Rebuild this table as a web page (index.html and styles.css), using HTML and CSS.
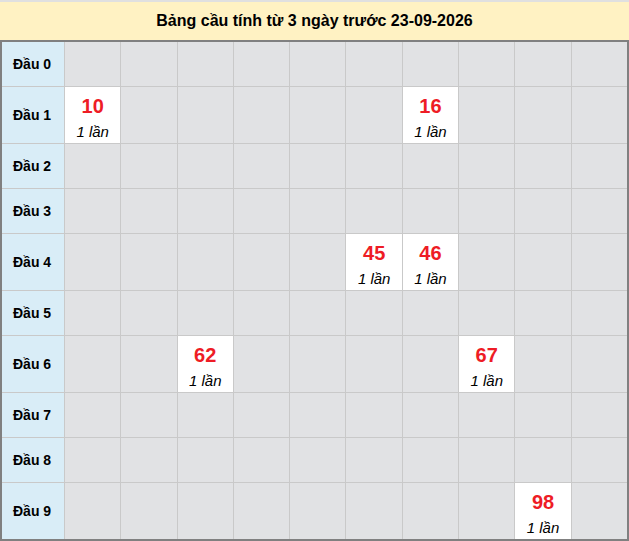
FILE: index.html
```html
<!DOCTYPE html>
<html lang="vi">
<head>
<meta charset="utf-8">
<title>Bảng cầu</title>
<link rel="stylesheet" href="styles.css">
</head>
<body>
<div class="wrap">
  <div class="title">Bảng cầu tính từ 3 ngày trước 23-09-2026</div>
  <div class="grid">
    <div class="lbl">Đầu 0</div>
    <div class="c"></div><div class="c"></div><div class="c"></div><div class="c"></div><div class="c"></div><div class="c"></div><div class="c"></div><div class="c"></div><div class="c"></div><div class="c"></div>

    <div class="lbl">Đầu 1</div>
    <div class="c hit"><span class="num">10</span><span class="cnt">1 lần</span></div><div class="c"></div><div class="c"></div><div class="c"></div><div class="c"></div><div class="c"></div><div class="c hit"><span class="num">16</span><span class="cnt">1 lần</span></div><div class="c"></div><div class="c"></div><div class="c"></div>

    <div class="lbl">Đầu 2</div>
    <div class="c"></div><div class="c"></div><div class="c"></div><div class="c"></div><div class="c"></div><div class="c"></div><div class="c"></div><div class="c"></div><div class="c"></div><div class="c"></div>

    <div class="lbl">Đầu 3</div>
    <div class="c"></div><div class="c"></div><div class="c"></div><div class="c"></div><div class="c"></div><div class="c"></div><div class="c"></div><div class="c"></div><div class="c"></div><div class="c"></div>

    <div class="lbl">Đầu 4</div>
    <div class="c"></div><div class="c"></div><div class="c"></div><div class="c"></div><div class="c"></div><div class="c hit"><span class="num">45</span><span class="cnt">1 lần</span></div><div class="c hit"><span class="num">46</span><span class="cnt">1 lần</span></div><div class="c"></div><div class="c"></div><div class="c"></div>

    <div class="lbl">Đầu 5</div>
    <div class="c"></div><div class="c"></div><div class="c"></div><div class="c"></div><div class="c"></div><div class="c"></div><div class="c"></div><div class="c"></div><div class="c"></div><div class="c"></div>

    <div class="lbl">Đầu 6</div>
    <div class="c"></div><div class="c"></div><div class="c hit"><span class="num">62</span><span class="cnt">1 lần</span></div><div class="c"></div><div class="c"></div><div class="c"></div><div class="c"></div><div class="c hit"><span class="num">67</span><span class="cnt">1 lần</span></div><div class="c"></div><div class="c"></div>

    <div class="lbl">Đầu 7</div>
    <div class="c"></div><div class="c"></div><div class="c"></div><div class="c"></div><div class="c"></div><div class="c"></div><div class="c"></div><div class="c"></div><div class="c"></div><div class="c"></div>

    <div class="lbl">Đầu 8</div>
    <div class="c"></div><div class="c"></div><div class="c"></div><div class="c"></div><div class="c"></div><div class="c"></div><div class="c"></div><div class="c"></div><div class="c"></div><div class="c"></div>

    <div class="lbl">Đầu 9</div>
    <div class="c"></div><div class="c"></div><div class="c"></div><div class="c"></div><div class="c"></div><div class="c"></div><div class="c"></div><div class="c"></div><div class="c hit"><span class="num">98</span><span class="cnt">1 lần</span></div><div class="c"></div>
  </div>
</div>
</body>
</html>
```
FILE: styles.css
```css
html, body {
  margin: 0;
  padding: 0;
  background: #ffffff;
}
.wrap {
  width: 629px;
  font-family: "Liberation Sans", Arial, sans-serif;
  color: #000;
}
.title {
  border-top: 2px solid #e0e0e0;
  background: #fff2c3;
  height: 38px;
  line-height: 38px;
  text-align: center;
  font-weight: bold;
  font-size: 16px;
}
.grid {
  display: grid;
  grid-template-columns: 62px repeat(10, 1fr);
  grid-auto-rows: minmax(44px, auto);
  gap: 1px;
  background: #c9c9c9;
  border: 2px solid #808080;
}
.lbl {
  background: #d9edf7;
  font-weight: bold;
  font-size: 14px;
  padding-left: 11px;
  display: flex;
  align-items: center;
}
.c {
  background: #e1e2e4;
}
.hit {
  background: #ffffff;
  display: flex;
  flex-direction: column;
  align-items: center;
  padding: 5px 0 1px;
}
.num {
  color: #ee1c25;
  font-weight: bold;
  font-size: 20px;
  line-height: 28px;
}
.cnt {
  margin-top: 2px;
  font-style: italic;
  font-size: 15px;
  line-height: 20px;
}
```
